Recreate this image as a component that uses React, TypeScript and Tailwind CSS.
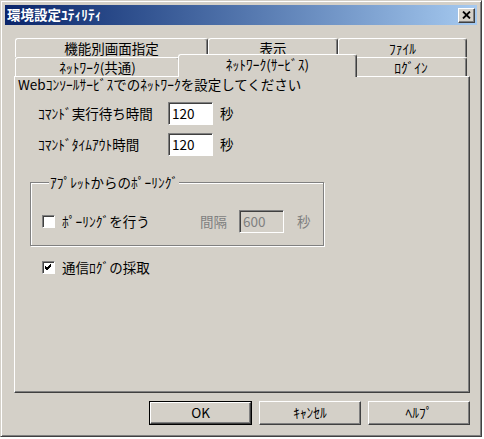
import React from "react";

const RAISED =
  "border border-t-white border-l-white border-r-[#404040] border-b-[#404040] shadow-[inset_-1px_-1px_0_#808080]";
const SUNKEN =
  "border border-t-[#808080] border-l-[#808080] border-r-white border-b-white shadow-[inset_1px_1px_0_#404040]";
const TAB =
  "border-t border-l border-r border-t-white border-l-white border-r-[#404040] shadow-[inset_-1px_0_0_#808080] rounded-tl-[3px] rounded-tr-[3px] flex items-center justify-center bg-[#d4d0c8] leading-none";

function Tab({ w, children }: { w: string; children: React.ReactNode }) {
  return <div className={`${TAB} ${w} h-[19px] pt-[1px]`}>{children}</div>;
}

function TextBox({ value, disabled }: { value: string; disabled?: boolean }) {
  return (
    <div
      className={`${SUNKEN} ${disabled ? "bg-[#d4d0c8] text-[#808080]" : "bg-white text-black"} w-[45px] h-[23px] flex items-center pl-[3px] leading-none`}
    >
      {value}
    </div>
  );
}

function CheckBox({ checked }: { checked?: boolean }) {
  return (
    <div className={`${SUNKEN} bg-white w-[13px] h-[13px] flex items-center justify-center shrink-0`}>
      {checked && (
        <svg width="7" height="7" viewBox="0 0 7 7">
          <path d="M0 2 L2 4 L6 0 M0 3 L2 5 L6 1 M0 4 L2 6 L6 2" stroke="black" strokeWidth="1" fill="none" shapeRendering="crispEdges" />
        </svg>
      )}
    </div>
  );
}

function Button({ children, def }: { children: React.ReactNode; def?: boolean }) {
  const inner = (
    <div className={`${RAISED} w-full h-full flex items-center justify-center bg-[#d4d0c8] leading-none`}>{children}</div>
  );
  if (def) {
    return <div className="border border-black w-[103px] h-[24px]">{inner}</div>;
  }
  return <div className="w-[102px] h-[24px]">{inner}</div>;
}

export default function App() {
  return (
    <div className="w-[484px] h-[439px] bg-white font-['Noto_Sans_CJK_JP','Noto_Sans_CJK_SC',sans-serif] text-[13.5px] text-black">
      <div className="w-[482px] h-[437px] bg-[#d4d0c8] border border-t-[#d4d0c8] border-l-[#d4d0c8] border-r-[#404040] border-b-[#404040] shadow-[inset_1px_1px_0_white,inset_-1px_-1px_0_#808080] p-[4px] flex flex-col">
        {/* Title bar */}
        <div className="h-[20px] bg-gradient-to-r from-[#0a246a] to-[#a6caf0] flex items-center justify-between pl-[2px] pr-[2px]">
          <span className="text-white font-bold text-[13.5px] leading-none">環境設定ﾕﾃｨﾘﾃｨ</span>
          <div className={`${RAISED} bg-[#d4d0c8] w-[17px] h-[15px] flex items-center justify-center`}>
            <svg width="9" height="8" viewBox="0 0 9 8">
              <path d="M1 0.5 L8 7.5 M8 0.5 L1 7.5" stroke="black" strokeWidth="1.8" fill="none" />
            </svg>
          </div>
        </div>

        {/* Body */}
        <div className="pl-[9px] pt-[13px] flex flex-col">
          {/* Tab row 1 */}
          <div className="flex ml-[1px] h-[19px]">
            <Tab w="w-[193px]">機能別画面指定</Tab>
            <Tab w="w-[130px]">表示</Tab>
            <Tab w="w-[129px]">ﾌｧｲﾙ</Tab>
          </div>
          {/* Tab row 2 */}
          <div className="flex items-end ml-[1px] h-[19px]">
            <Tab w="w-[165px]">ﾈｯﾄﾜｰｸ(共通)</Tab>
            <div className={`${TAB} relative z-10 w-[179px] h-[23px] -ml-[2px] -mr-[2px] -mb-[1px] pb-[3px]`}>
              ﾈｯﾄﾜｰｸ(ｻｰﾋﾞｽ)
            </div>
            <Tab w="w-[112px]">ﾛｸﾞｲﾝ</Tab>
          </div>

          {/* Panel */}
          <div className="w-[456px] h-[317px] border border-t-white border-l-white border-r-[#404040] border-b-[#404040] shadow-[inset_-1px_-1px_0_#808080] flex flex-col">
            <div className="pl-[3px] h-[14px] leading-[14px] mt-[0px]">
              Webｺﾝｿｰﾙｻｰﾋﾞｽでのﾈｯﾄﾜｰｸを設定してください
            </div>

            <div className="flex items-center h-[23px] mt-[11px] pl-[23px]">
              <span className="w-[130px]">ｺﾏﾝﾄﾞ実行待ち時間</span>
              <TextBox value="120" />
              <span className="ml-[7px]">秒</span>
            </div>
            <div className="flex items-center h-[23px] mt-[8px] pl-[23px]">
              <span className="w-[130px]">ｺﾏﾝﾄﾞﾀｲﾑｱｳﾄ時間</span>
              <TextBox value="120" />
              <span className="ml-[7px]">秒</span>
            </div>

            <fieldset className="ml-[15px] mt-[19px] w-[294px] h-[71px] border border-[#808080] shadow-[inset_1px_1px_0_white,1px_1px_0_white] pl-[11px] pr-0">
              <legend className="ml-[7px] px-[1px] bg-[#d4d0c8] leading-[14px] h-[14px]">ｱﾌﾟﾚｯﾄからのﾎﾟｰﾘﾝｸﾞ</legend>
              <div className="flex items-center h-[23px] mt-[21px]">
                <CheckBox />
                <span className="ml-[7px] w-[138px]">ﾎﾟｰﾘﾝｸﾞを行う</span>
                <span className="w-[39px] text-[#808080]">間隔</span>
                <TextBox value="600" disabled />
                <span className="ml-[13px] text-[#808080]">秒</span>
              </div>
            </fieldset>

            <div className="flex items-center h-[15px] mt-[14px] pl-[27px]">
              <CheckBox checked />
              <span className="ml-[7px]">通信ﾛｸﾞの採取</span>
            </div>
          </div>

          {/* Buttons */}
          <div className="flex justify-end gap-[7px] mt-[8px] w-[456px]">
            <Button def>OK</Button>
            <Button>ｷｬﾝｾﾙ</Button>
            <Button>ﾍﾙﾌﾟ</Button>
          </div>
        </div>
      </div>
    </div>
  );
}
